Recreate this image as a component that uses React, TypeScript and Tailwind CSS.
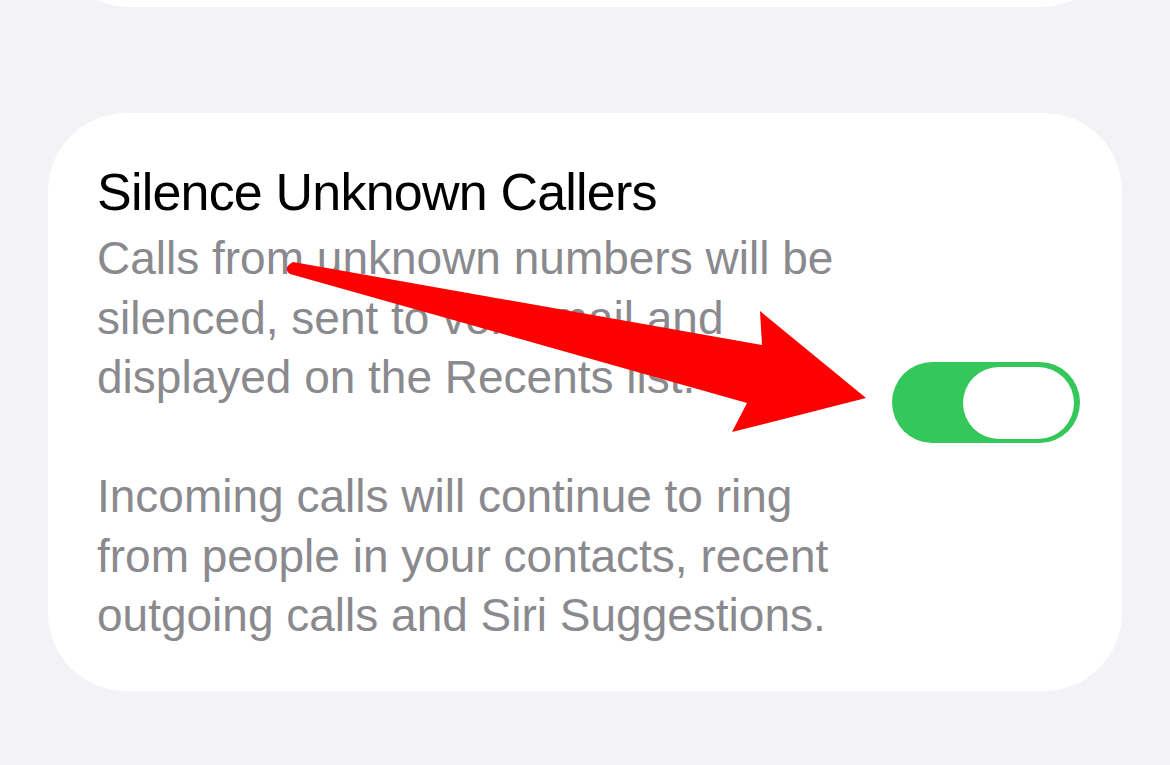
export default function App() {
  return (
    <div className="relative h-[765px] w-[1170px] overflow-hidden bg-[#f2f2f7] font-['Liberation_Sans',Arial,sans-serif]">
      {/* previous group, only its bottom edge shows */}
      <div className="mx-[48px] -mt-[173px] h-[180px] rounded-[82px] bg-white" />

      <div className="mx-[48px] mt-[106px] flex items-center rounded-[78px] bg-white pb-[45px] pl-[49px] pr-[42px] pt-[49px]">
        <div className="flex-1 whitespace-nowrap">
          <div className="text-[52px] leading-[60px] tracking-[-0.8px] text-black">
            Silence Unknown Callers
          </div>
          <p className="mt-[7px] text-[46px] leading-[59.5px] text-[#8a8a8e]">
            Calls from unknown numbers will be
            <br />
            silenced, sent to voicemail and
            <br />
            displayed on the Recents list.
          </p>
          <p className="mt-[59.5px] text-[46px] leading-[59.5px] text-[#8a8a8e]">
            Incoming calls will continue to ring
            <br />
            from people in your contacts, recent
            <br />
            outgoing calls and Siri Suggestions.
          </p>
        </div>

        <button className="-mt-[2px] flex h-[81px] w-[188px] shrink-0 items-center justify-end rounded-full bg-[#34c759] pr-[6px]">
          <span className="h-[72px] w-[111px] rounded-full bg-white" />
        </button>
      </div>

      {/* annotation arrow */}
      <svg
        className="pointer-events-none absolute left-0 top-0"
        width="1170"
        height="765"
        viewBox="0 0 1170 765"
      >
        <path
          d="M 293 262 L 762 345 L 760 311 L 866 398 L 732 432 L 747 403 L 290 274 Q 282 268 293 262 Z"
          fill="#fe0000"
        />
      </svg>
    </div>
  );
}
